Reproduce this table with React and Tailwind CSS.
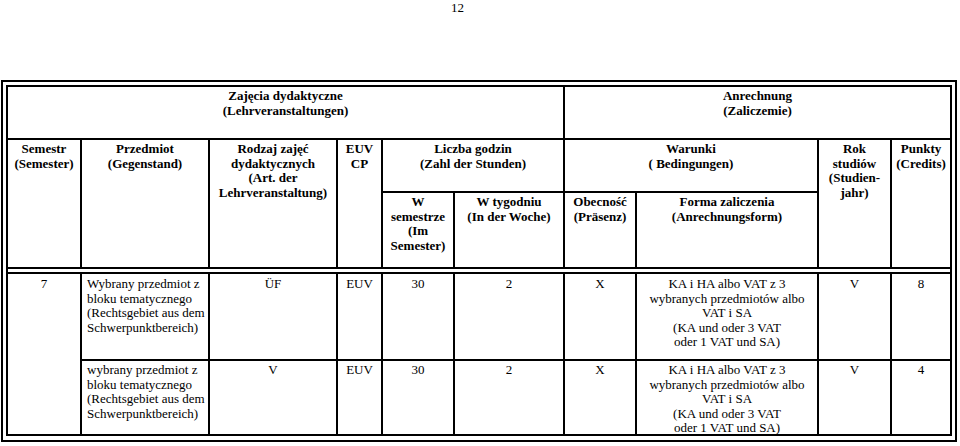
export default function App() {
    const cell = "bg-white text-center";
    const hd = "bg-white text-center font-bold pt-[2px]";
    const bd = "bg-white text-center pt-[3px]";
    const bd2 = "bg-white text-center pt-[2px]";

    return (
        <div className="w-[960px] h-[446px] bg-white font-['Liberation_Serif',serif] text-[13px] leading-[14.6px] text-black overflow-hidden">
            <div className="pl-[451px] pt-[1px] h-[80px] text-[13px]">12</div>

            <div className="ml-[1px] w-[956px] border-2 border-black p-[3px] pb-[4px]">
                <div className="grid grid-cols-[72px_126px_126px_43px_70px_108px_70px_180px_71px_58px] grid-rows-[51px_51px_74px_3px_85px_73px] gap-[2px] bg-black border-2 border-black">
                    {/* header row 1 */}
                    <div className={`${hd} col-start-1 col-span-6 row-start-1`}>
                        Zajęcia dydaktyczne<br />(Lehrveranstaltungen)
                    </div>
                    <div className={`${hd} col-start-7 col-span-4 row-start-1`}>
                        Anrechnung<br />(Zaliczemie)
                    </div>

                    {/* header row 2 + 3 */}
                    <div className={`${hd} col-start-1 row-start-2 row-span-2`}>
                        Semestr<br />(Semester)
                    </div>
                    <div className={`${hd} col-start-2 row-start-2 row-span-2`}>
                        Przedmiot<br />(Gegenstand)
                    </div>
                    <div className={`${hd} col-start-3 row-start-2 row-span-2`}>
                        Rodzaj zajęć<br />dydaktycznych<br />(Art. der<br />Lehrveranstaltung)
                    </div>
                    <div className={`${hd} col-start-4 row-start-2 row-span-2`}>
                        EUV<br />CP
                    </div>
                    <div className={`${hd} col-start-5 col-span-2 row-start-2`}>
                        Liczba godzin<br />(Zahl der Stunden)
                    </div>
                    <div className={`${hd} col-start-7 col-span-2 row-start-2`}>
                        Warunki<br />( Bedingungen)
                    </div>
                    <div className={`${hd} col-start-9 row-start-2 row-span-2`}>
                        Rok<br />studiów<br />(Studien-<br />jahr)
                    </div>
                    <div className={`${hd} col-start-10 row-start-2 row-span-2`}>
                        Punkty<br />(Credits)
                    </div>
                    <div className={`${hd} col-start-5 row-start-3`}>
                        W<br />semestrze<br />(Im<br />Semester)
                    </div>
                    <div className={`${hd} col-start-6 row-start-3`}>
                        W tygodniu<br />(In der Woche)
                    </div>
                    <div className={`${hd} col-start-7 row-start-3`}>
                        Obecność<br />(Präsenz)
                    </div>
                    <div className={`${hd} col-start-8 row-start-3`}>
                        Forma zaliczenia<br />(Anrechnungsform)
                    </div>

                    {/* double line between header and body */}
                    <div className={`${cell} col-start-1 col-span-10 row-start-4`}></div>

                    {/* body */}
                    <div className={`${bd} col-start-1 row-start-5 row-span-2`}>7</div>

                    <div className="bg-white text-left pt-[3px] pl-[5px] col-start-2 row-start-5">
                        Wybrany przedmiot z<br />bloku tematycznego<br />(Rechtsgebiet aus dem<br />Schwerpunktbereich)
                    </div>
                    <div className={`${bd} col-start-3 row-start-5`}>ÜF</div>
                    <div className={`${bd} col-start-4 row-start-5`}>EUV</div>
                    <div className={`${bd} col-start-5 row-start-5`}>30</div>
                    <div className={`${bd} col-start-6 row-start-5`}>2</div>
                    <div className={`${bd} col-start-7 row-start-5`}>X</div>
                    <div className={`${bd} col-start-8 row-start-5`}>
                        KA i HA albo VAT z 3<br />wybranych przedmiotów albo<br />VAT i SA<br />(KA und oder 3 VAT<br />oder 1 VAT und SA)
                    </div>
                    <div className={`${bd} col-start-9 row-start-5`}>V</div>
                    <div className={`${bd} col-start-10 row-start-5`}>8</div>

                    <div className="bg-white text-left pt-[2px] pl-[5px] col-start-2 row-start-6">
                        wybrany przedmiot z<br />bloku tematycznego<br />(Rechtsgebiet aus dem<br />Schwerpunktbereich)
                    </div>
                    <div className={`${bd2} col-start-3 row-start-6`}>V</div>
                    <div className={`${bd2} col-start-4 row-start-6`}>EUV</div>
                    <div className={`${bd2} col-start-5 row-start-6`}>30</div>
                    <div className={`${bd2} col-start-6 row-start-6`}>2</div>
                    <div className={`${bd2} col-start-7 row-start-6`}>X</div>
                    <div className={`${bd2} col-start-8 row-start-6`}>
                        KA i HA albo VAT z 3<br />wybranych przedmiotów albo<br />VAT i SA<br />(KA und oder 3 VAT<br />oder 1 VAT und SA)
                    </div>
                    <div className={`${bd2} col-start-9 row-start-6`}>V</div>
                    <div className={`${bd2} col-start-10 row-start-6`}>4</div>
                </div>
            </div>
        </div>
    );
}
